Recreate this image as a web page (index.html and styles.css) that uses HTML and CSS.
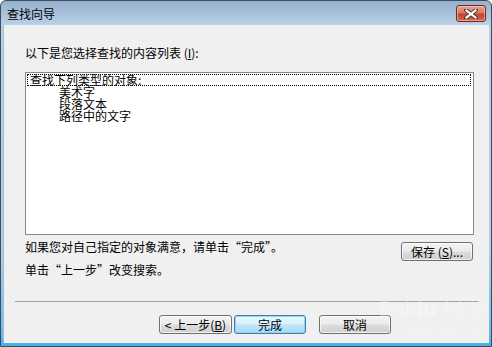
FILE: index.html
```html
<!DOCTYPE html>
<html lang="zh-CN">
<head>
    <meta charset="UTF-8">
    <link rel="stylesheet" href="styles.css">
</head>
<body>
    <div class="window">
        <div class="titlebar">
            <span class="title">查找向导</span>
            <button class="close-btn">
                <svg width="14" height="10" viewBox="0 0 14 10">
                    <path d="M2 1 L12 9 M12 1 L2 9" stroke="#4a3a3a" stroke-width="4" stroke-linecap="square"/>
                    <path d="M2.5 1.5 L11.5 8.5 M11.5 1.5 L2.5 8.5" stroke="#ffffff" stroke-width="2.2" stroke-linecap="square"/>
                </svg>
            </button>
        </div>
        <div class="client">
            <div class="label">以下是您选择查找的内容列表 (<u>I</u>):</div>
            <div class="listbox">
                <div class="item selected">查找下列类型的对象:</div>
                <div class="item sub">美术字</div>
                <div class="item sub">段落文本</div>
                <div class="item sub">路径中的文字</div>
            </div>
            <div class="row">
                <span class="hint">如果您对自己指定的对象满意，请单击“完成”。</span>
                <button class="btn save-btn">保存 (<u>S</u>)...</button>
            </div>
            <div class="hint second">单击“上一步”改变搜索。</div>
            <div class="separator"></div>
            <div class="buttons">
                <button class="btn back-btn">&lt; 上一步(<u>B</u>)</button>
                <button class="btn default-btn">完成</button>
                <button class="btn cancel-btn">取消</button>
            </div>
            <div class="watermark">Bai<b>du</b> 经验<br><small>jingyan.baidu.com</small></div>
        </div>
    </div>
</body>
</html>
```

FILE: styles.css
```css
* {
    box-sizing: border-box;
}
body {
    margin: 0;
    font-family: "Noto Sans CJK SC", "Liberation Sans", sans-serif;
    font-size: 12px;
    background: #ffffff;
}
.window {
    width: 492px;
    height: 347px;
    border: 1px solid #3b4c63;
    border-radius: 6px 6px 0 0;
    background: linear-gradient(#97b1cc 0, #b9d0e7 24px, #b4cde6 250px, #6cc0ea 330px, #3fb0e6 100%);
    display: flex;
    flex-direction: column;
    overflow: hidden;
}
.titlebar {
    height: 24px;
    display: flex;
    justify-content: space-between;
    align-items: flex-start;
    flex-shrink: 0;
}
.title {
    margin-left: 6px;
    margin-top: 6px;
    line-height: 14px;
    color: #000000;
}
.close-btn {
    width: 30px;
    height: 17px;
    margin-top: 4px;
    margin-right: 5px;
    padding: 0;
    border: 1px solid #6b2a24;
    border-radius: 3px;
    background: linear-gradient(#e8a493 0, #d97a63 45%, #c2432c 55%, #d46a4a 100%);
    box-shadow: inset 0 0 0 1px rgba(255, 220, 210, 0.5);
    display: flex;
    align-items: center;
    justify-content: center;
}
.client {
    position: relative;
    flex: 1;
    margin: 0 2px 3px 2px;
    background: #f0f0f0;
    border-left: 1px solid #a3bcd6;
    display: flex;
    flex-direction: column;
    padding-left: 21px;
    padding-top: 22px;
}
.label {
    line-height: 12px;
    height: 12px;
    color: #000000;
}
.listbox {
    margin-top: 13px;
    width: 449px;
    height: 163px;
    border: 1px solid #828790;
    background: #ffffff;
    padding: 1px 2px 0 1px;
}
.item {
    line-height: 12px;
    height: 12px;
    padding-left: 3px;
}
.item.selected {
    outline: 1px dotted #000000;
    outline-offset: -1px;
}
.item.sub {
    padding-left: 32px;
}
.row {
    display: flex;
    justify-content: space-between;
    align-items: flex-start;
    width: 449px;
    margin-top: 6px;
}
.hint {
    line-height: 12px;
}
.hint.second {
    margin-top: 3px;
}
.btn {
    font-family: "Noto Sans CJK SC", "Liberation Sans", sans-serif;
    font-size: 12px;
    height: 19px;
    padding: 0;
    line-height: 15px;
    border: 1px solid #707070;
    border-radius: 3px;
    background: linear-gradient(#f3f3f3 0, #ebebeb 48%, #dddddd 52%, #cfcfcf 100%);
    box-shadow: inset 0 0 0 1px rgba(255, 255, 255, 0.7);
    color: #000000;
}
.save-btn {
    width: 72px;
    margin-top: 1px;
    margin-right: 1px;
}
.separator {
    margin-top: 25px;
    margin-left: -10px;
    width: 464px;
    height: 1px;
    background: #a0a0a0;
}
.buttons {
    display: flex;
    margin-top: 13px;
    margin-left: 134px;
}
.back-btn {
    width: 73px;
}
.default-btn {
    width: 72px;
    margin-left: 2px;
    border-color: #3c7fb1;
    background: linear-gradient(#eaf6fd 0, #d9f0fc 48%, #bee6fd 52%, #a7d9f5 100%);
    box-shadow: inset 0 0 0 1px rgba(140, 210, 245, 0.9);
}
.cancel-btn {
    width: 72px;
    margin-left: 13px;
}
.watermark {
    position: absolute;
    right: 2px;
    bottom: 4px;
    color: rgba(255, 255, 255, 0.3);
    font-family: "Liberation Sans", sans-serif;
    font-size: 22px;
    line-height: 18px;
    text-align: right;
    pointer-events: none;
}
.watermark small {
    font-size: 11px;
}
```
